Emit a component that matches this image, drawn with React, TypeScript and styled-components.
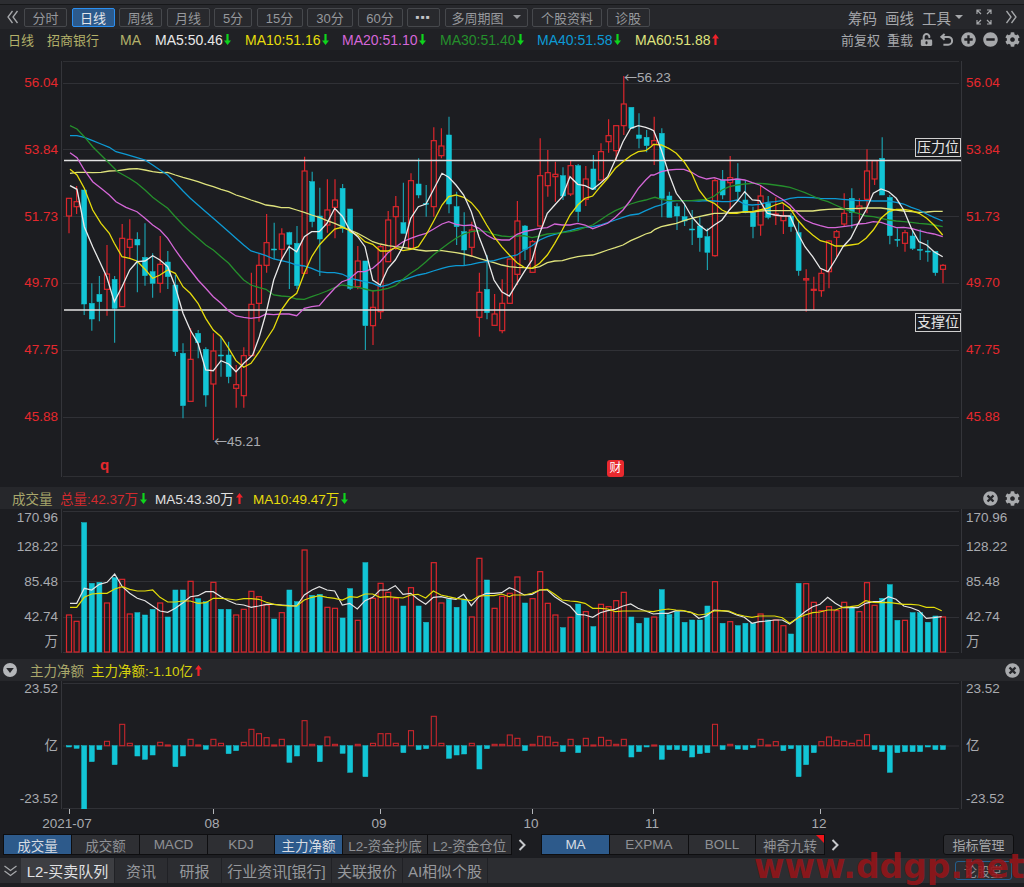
import React from 'react';
import styled, { createGlobalStyle } from 'styled-components';
import { FaCog, FaMinusCircle, FaPlusCircle, FaTimesCircle, FaUnlockAlt } from 'react-icons/fa';

const GlobalStyle = createGlobalStyle`
  html, body { margin: 0; padding: 0; background: #1c1d21; }
  * { box-sizing: border-box; }
`;

const FONT = `"Liberation Sans", "Noto Sans CJK SC", sans-serif`;
const RED = '#dc262c';
const CYAN = '#12c5d6';
const CYAN_WICK = '#1a9dab';
const STEP = 7.6;
const xOf = (i: number) => 68 + STEP * i;

// all chart data was read off the screenshot at 3x, so it stays in those units
type Pt = [number, number];
type Candle = [number, number, number, number, number]; // up, top, bottom, high, low

const toPage = (ox: number, oy: number, pts: Pt[]): Pt[] =>
  pts.map(([x, y]) => [ox + x / 3, oy + y / 3]);

const joinLine = (...parts: Pt[][]) => {
  const out: Pt[] = [];
  parts.flat().forEach(p => {
    if (!out.length || p[0] > out[out.length - 1][0]) out.push(p);
  });
  return out.map(p => `${p[0].toFixed(1)},${p[1].toFixed(1)}`).join(' ');
};

const C_A: Candle[] = [
  [1,265,318,265,370],[1,275,290,228,312],[0,240,582,240,615],[0,580,627,520,662],[0,553,575,498,634],
  [1,492,538,405,617],[0,508,595,498,698],[1,385,590,342,590],[1,388,412,328,445],[0,388,405,367,547],
  [0,442,497,340,527],[0,485,520,430,563],[1,463,520,378,548],[0,456,500,423,537],[0,525,725,495,738],
  [0,730,887,700,925],[1,748,874,655,874],[0,670,698,660,745],[0,718,855,712,890],[1,723,822,670,990],
  [0,735,738,680,800],[0,735,800,695,820],[1,824,835,765,893],[1,737,857,712,893],[1,583,737,488,737],
  [1,466,580,430,635],[1,398,466,312,488],[0,417,419,338,448],[1,372,418,355,450],[0,368,403,365,537],
  [0,400,527,348,537],[1,183,490,140,490],[0,215,335,185,352],[0,318,387,233,498],[1,300,345,208,368],
  [1,270,292,208,385],[0,235,355,222,368],[0,297,535,297,540],
];
const C_B: Candle[] = [
  [1,513,590,468,598],[0,513,707,513,780],[1,652,707,600,765],[1,470,665,465,687],[1,390,515,363,515],
  [1,350,380,318,480],[0,398,430,278,430],[1,272,475,250,480],[0,282,315,205,325],[0,340,342,285,380],
  [1,152,350,112,380],[1,168,197,115,205],[0,135,342,80,370],[0,350,410,305,465],[0,425,480,367,525],
  [1,420,472,395,500],[1,607,682,548,740],[0,598,668,495,688],[1,672,706,612,708],[1,640,722,568,730],
  [1,507,640,507,640],[1,393,553,333,585],[0,408,478,405,510],[1,455,547,450,547],[1,257,408,145,410],
  [1,248,287,180,320],[1,253,260,215,335],[0,257,318,232,330],[1,227,312,212,318],[0,227,365,222,395],
  [1,267,328,228,348],[0,237,298,195,300],[1,185,270,160,270],[1,137,155,88,188],[1,107,182,105,210],
  [1,42,107,-42,135],[0,52,115,52,115],[0,135,145,70,175],[0,142,167,120,187],
];
const C_C: Candle[] = [
  [1,92,103,20,165],[0,70,265,55,322],[0,258,322,245,322],[0,290,318,280,360],[0,320,333,280,348],
  [0,357,359,300,405],[0,348,383,322,425],[0,380,427,355,480],[1,212,437,205,440],[0,210,255,180,268],
  [1,203,218,138,300],[0,207,245,160,270],[0,270,308,210,310],[0,308,350,290,385],[1,258,345,225,377],
  [0,280,322,258,328],[1,312,315,262,345],[1,317,332,280,372],[0,318,350,310,365],[0,368,482,335,497],
  [1,506,510,478,605],[1,538,541,500,600],[1,490,542,475,560],[1,393,485,390,535],[1,365,382,360,440],
  [1,310,342,250,350],[0,265,308,235,355],[1,288,297,265,340],[1,183,268,118,310],[1,152,207,152,225],
  [0,145,255,82,255],[0,262,377,255,403],[0,388,390,355,410],[1,368,400,360,425],[0,378,415,360,420],
  [0,418,420,358,450],[0,423,425,390,455],[0,424,488,424,497],[1,466,478,462,520],
];
const offsetCandles = (list: Candle[], oy: number): Candle[] =>
  list.map(([u, t, b, h, l]) => [u, oy + t / 3, oy + b / 3, oy + h / 3, oy + l / 3]);
const CANDLES = [...offsetCandles(C_A, 110), ...offsetCandles(C_B, 90), ...offsetCandles(C_C, 110)];

const MA_LINES: { color: string; points: string }[] = [
  {
    color: '#dfe37d',
    points: joinLine(
      toPage(50, 110, [[57,190],[78,187],[100,187],[125,188],[150,187],[175,183],[200,182],[235,177],[258,176],[282,180],[305,185],[327,188],[350,187],[373,195],[396,202],[418,208],[441,215],[464,223],[487,230],[510,238],[533,245],[555,255],[578,262],[600,270],[625,278],[645,285],[668,288],[691,293],[714,293],[737,300],[760,307],[782,315],[805,322],[828,332],[851,340],[873,350],[896,362]]),
      toPage(340, 90, [[0,408],[27,420],[50,430],[72,442],[95,455],[118,462],[141,467],[163,470],[186,472],[209,476],[232,480],[255,483],[277,482],[303,482],[323,485],[345,488],[368,492],[391,498],[414,505],[437,512],[459,518],[482,525],[505,530],[528,532],[550,533],[573,535],[596,530],[619,518],[641,513],[664,512],[687,505],[710,500],[732,497],[755,495],[778,488],[800,480],[823,473],[846,465],[869,452],[892,442],[914,432],[930,427]]),
      toPage(640, 110, [[0,380],[20,370],[42,358],[61,350],[83,345],[106,340],[129,332],[152,325],[174,320],[197,315],[220,310],[243,310],[265,308],[288,307],[311,306],[334,306],[356,303],[379,302],[402,302],[424,302],[447,302],[470,303],[492,303],[515,303],[538,300],[561,298],[583,297],[606,297],[629,296],[652,295],[675,294],[697,294],[720,294],[743,297],[766,300],[788,303],[811,305],[834,307],[857,306],[879,304],[905,304]]),
    ),
  },
  {
    color: '#0d9ad4',
    points: joinLine(
      toPage(50, 110, [[57,77],[78,77],[100,82],[125,92],[150,102],[175,112],[195,125],[225,133],[258,143],[282,150],[305,165],[327,180],[350,195],[373,218],[396,243],[418,265],[441,285],[464,305],[487,325],[510,345],[533,365],[555,385],[578,405],[600,423],[625,430],[645,437],[668,447],[691,452],[714,457],[737,465],[760,468],[782,475],[805,485],[828,488],[851,488],[873,492],[896,503]]),
      toPage(340, 90, [[0,553],[27,565],[50,570],[72,575],[95,580],[118,590],[141,585],[163,575],[186,570],[209,562],[232,555],[255,550],[277,543],[303,535],[323,530],[345,527],[368,527],[391,523],[414,518],[437,515],[459,512],[482,505],[505,500],[528,495],[550,480],[573,467],[596,450],[619,440],[641,433],[664,427],[687,422],[710,415],[732,412],[755,410],[778,405],[800,398],[823,390],[846,382],[869,375],[892,372],[914,362],[930,355]]),
      toPage(640, 110, [[0,308],[20,297],[42,290],[61,285],[83,275],[106,272],[129,272],[152,272],[174,273],[197,272],[220,273],[243,275],[265,275],[288,270],[311,283],[334,285],[356,283],[379,277],[402,275],[424,272],[447,265],[470,262],[492,262],[515,263],[538,265],[561,266],[583,266],[606,268],[629,270],[652,272],[675,272],[697,273],[720,273],[743,273],[766,277],[788,282],[811,292],[834,300],[857,312],[879,322],[905,333]]),
    ),
  },
  {
    color: '#258f2c',
    points: joinLine(
      toPage(50, 110, [[57,47],[78,57],[100,80],[125,110],[150,135],[175,160],[200,185],[235,205],[258,220],[282,240],[305,262],[327,278],[350,295],[373,320],[396,345],[418,365],[441,385],[464,405],[487,420],[510,440],[533,460],[555,485],[578,510],[600,525],[625,533],[645,538],[668,555],[691,558],[714,560],[737,567],[760,568],[782,560],[805,552],[828,543],[851,533],[873,525],[896,528]]),
      toPage(340, 90, [[0,585],[27,590],[50,592],[72,597],[95,603],[118,600],[141,595],[163,587],[186,568],[209,550],[232,535],[255,515],[277,495],[303,475],[323,460],[345,445],[368,432],[391,425],[414,422],[437,425],[459,433],[482,438],[505,440],[528,438],[550,437],[573,443],[596,438],[619,432],[641,430],[664,428],[687,425],[710,420],[732,412],[755,405],[778,390],[800,375],[823,362],[846,352],[869,342],[892,335],[914,330],[930,325]]),
      toPage(640, 110, [[0,270],[20,267],[42,262],[61,268],[83,272],[106,272],[129,272],[152,272],[174,270],[197,268],[220,258],[243,240],[265,230],[288,225],[311,222],[334,220],[356,220],[379,222],[402,225],[424,228],[447,232],[470,240],[492,248],[515,258],[538,268],[561,275],[583,285],[606,295],[629,305],[652,310],[675,318],[697,320],[720,325],[743,330],[766,333],[788,335],[811,337],[834,340],[857,342],[879,345],[905,350]]),
    ),
  },
  {
    color: '#d567d8',
    points: joinLine(
      toPage(50, 110, [[57,128],[78,143],[100,180],[125,215],[150,235],[175,255],[195,275],[225,292],[258,305],[282,325],[305,345],[327,360],[350,385],[373,420],[396,452],[418,480],[441,510],[464,535],[487,560],[510,580],[533,603],[555,618],[578,622],[600,625],[625,622],[645,612],[668,614],[691,612],[714,612],[737,617],[760,595],[782,590],[805,587],[828,560],[851,535],[873,515],[896,507]]),
      toPage(340, 90, [[0,583],[27,565],[50,545],[72,545],[95,535],[118,515],[141,488],[163,472],[186,455],[209,445],[232,437],[255,430],[277,418],[303,402],[323,395],[345,403],[368,407],[391,405],[414,415],[437,435],[459,447],[482,450],[505,450],[528,433],[550,425],[573,420],[596,415],[619,413],[641,402],[664,405],[687,405],[710,400],[732,405],[755,416],[778,408],[800,400],[823,382],[846,360],[869,330],[892,295],[914,270],[930,255]]),
      toPage(640, 110, [[0,240],[20,215],[38,195],[61,185],[83,180],[106,178],[129,178],[152,187],[174,200],[197,207],[220,203],[243,210],[265,210],[288,207],[311,210],[334,218],[356,225],[379,240],[402,255],[424,268],[447,285],[470,310],[492,330],[515,340],[538,347],[561,353],[583,353],[606,350],[629,347],[652,342],[675,340],[697,335],[720,337],[743,345],[766,353],[788,352],[811,355],[834,362],[857,368],[879,372],[905,380]]),
    ),
  },
  {
    color: '#e6dc0c',
    points: joinLine(
      toPage(50, 110, [[57,178],[78,195],[100,235],[125,300],[150,340],[175,370],[190,400],[213,440],[236,445],[258,453],[282,478],[305,505],[327,495],[350,480],[373,490],[396,530],[418,550],[441,580],[464,625],[487,660],[510,680],[533,715],[555,752],[578,772],[600,760],[625,725],[645,690],[668,655],[691,600],[714,568],[737,550],[760,490],[782,440],[805,405],[828,380],[851,357],[873,352],[896,360]]),
      toPage(340, 90, [[0,408],[27,425],[50,435],[72,455],[95,463],[118,483],[141,483],[163,473],[186,482],[209,478],[232,470],[255,435],[277,395],[303,345],[323,320],[345,315],[368,322],[391,338],[414,365],[437,405],[459,440],[482,470],[505,495],[528,518],[550,532],[573,535],[596,520],[619,495],[641,460],[664,420],[687,375],[710,345],[732,325],[755,318],[778,290],[800,265],[823,235],[846,215],[869,197],[892,185],[914,182],[930,170]]),
      toPage(640, 110, [[0,125],[20,115],[38,103],[61,105],[83,115],[106,130],[129,155],[152,190],[174,240],[197,270],[220,280],[243,300],[265,310],[288,310],[311,305],[334,305],[356,300],[379,295],[402,285],[424,278],[447,295],[470,330],[492,355],[515,375],[538,392],[561,398],[583,408],[606,408],[629,405],[652,402],[675,385],[697,360],[720,325],[743,305],[766,298],[788,298],[811,302],[834,310],[857,325],[879,345],[905,375]]),
    ),
  },
  {
    color: '#e9e9e9',
    points: joinLine(
      toPage(50, 110, [[57,227],[78,238],[100,350],[125,410],[167,500],[190,575],[213,530],[236,480],[258,455],[282,453],[305,437],[327,450],[350,470],[373,530],[396,610],[418,660],[441,700],[464,780],[487,782],[510,752],[533,762],[555,785],[578,760],[605,735],[625,680],[645,610],[668,510],[691,450],[714,410],[737,425],[760,380],[782,365],[805,365],[828,340],[851,295],[875,320],[896,360]]),
      toPage(340, 90, [[0,375],[27,420],[50,440],[72,470],[95,570],[118,585],[141,535],[163,510],[186,470],[209,385],[232,350],[255,342],[277,300],[303,250],[323,262],[345,285],[368,315],[391,365],[414,440],[437,500],[459,570],[482,605],[505,618],[528,580],[550,545],[573,510],[596,430],[619,370],[641,345],[664,320],[687,260],[710,283],[732,287],[755,298],[778,280],[800,260],[823,210],[846,155],[869,115],[892,107],[914,112],[930,118]]),
      toPage(640, 110, [[0,45],[38,62],[61,120],[83,190],[106,250],[129,280],[152,320],[174,345],[197,362],[220,345],[243,330],[265,300],[288,275],[311,245],[334,270],[356,272],[379,310],[402,315],[424,318],[447,318],[470,370],[492,410],[515,440],[538,475],[561,485],[583,450],[606,410],[629,385],[652,340],[675,300],[697,250],[720,237],[743,245],[766,265],[788,300],[811,355],[834,395],[857,405],[879,425],[905,440]]),
    ),
  },
];

const VOLUME_TOPS = [
  405,424,128,310,307,369,293,298,402,398,405,388,369,411,330,330,304,356,365,307,388,388,405,388,334,350,375,417,398,330,
  365,210,346,343,382,385,414,326,421,248,355,310,337,356,378,323,378,427,248,369,358,382,360,411,235,300,385,349,340,
  291,369,356,275,370,405,443,412,372,395,440,373,380,362,337,411,430,414,411,329,404,395,427,420,420,378,305,430,425,437,
  430,430,402,420,420,437,462,310,311,367,392,380,392,367,382,395,308,376,355,314,421,421,398,398,427,408,411,
];

const VOL_MA5 = joinLine(
  toPage(0, 480, [[207,370],[227,370],[250,325],[272,330],[295,313],[318,307],[341,282],[364,320],[386,340],[409,355],[432,362],[455,378],[477,393],[500,397],[523,385],[546,368],[568,350],[591,347],[614,335],[637,335],[660,350],[682,362],[705,372],[728,375],[751,382],[773,378],[796,373],[819,373],[842,375],[864,377],[887,378],[910,345],[933,330],[955,320],[978,330],[1001,333],[1024,375],[1046,370],[1069,387],[1092,362],[1115,352],[1137,330],[1160,330],[1183,317],[1206,343],[1229,340],[1251,358],[1274,373],[1297,352],[1320,350],[1342,355],[1365,358],[1388,343],[1411,377],[1434,350],[1456,340],[1479,340],[1502,338],[1525,323]]),
  toPage(512, 480, [[0,327],[34,345],[57,343],[80,330],[103,330],[125,350],[148,365],[171,378],[193,403],[216,405],[239,412],[262,398],[284,392],[307,388],[330,378],[353,372],[375,385],[398,393],[421,402],[444,400],[466,400],[489,392],[512,393],[535,397],[557,415],[580,408],[603,390],[626,392],[648,395],[671,405],[694,412],[717,430],[739,425],[762,423],[785,420],[808,420],[830,432],[853,415],[876,395],[899,380],[921,373],[944,352],[967,370],[990,383],[1012,383],[1035,383],[1058,370],[1081,365],[1103,365],[1126,350],[1149,358],[1172,378],[1194,383],[1217,392],[1240,415],[1263,413],[1286,410]]),
);
const VOL_MA10 = joinLine(
  toPage(0, 480, [[207,382],[227,382],[250,352],[272,342],[295,340],[318,340],[341,327],[364,320],[386,328],[409,333],[432,333],[455,330],[477,352],[500,366],[523,366],[546,363],[568,363],[591,370],[614,368],[637,355],[660,355],[682,357],[705,360],[728,356],[751,356],[773,358],[796,367],[819,373],[842,376],[864,378],[887,378],[910,360],[933,352],[955,347],[978,352],[1001,355],[1024,360],[1046,350],[1069,352],[1092,342],[1115,342],[1137,352],[1160,350],[1183,352],[1206,354],[1229,345],[1251,343],[1274,354],[1297,333],[1320,345],[1342,350],[1365,355],[1388,358],[1411,362],[1434,348],[1456,347],[1479,347],[1502,342],[1525,350]]),
  toPage(512, 480, [[0,345],[34,345],[57,340],[80,330],[103,328],[125,343],[148,360],[171,363],[193,365],[216,370],[239,385],[262,385],[284,387],[307,395],[330,393],[353,393],[375,393],[398,393],[421,395],[444,390],[466,387],[489,390],[512,392],[535,398],[557,405],[580,402],[603,393],[626,392],[648,393],[671,403],[694,408],[717,412],[739,408],[762,408],[785,408],[808,413],[830,430],[853,415],[876,405],[899,398],[921,396],[944,390],[967,390],[990,382],[1012,380],[1035,377],[1058,362],[1081,367],[1103,368],[1126,367],[1149,370],[1172,373],[1194,373],[1217,375],[1240,382],[1263,382],[1286,392]]),
);

// net-flow bars: end of each bar, zero sits at 272
const FLOW_ENDS = [
  276,280,465,320,284,259,329,208,265,303,313,300,262,270,335,303,253,270,283,253,265,296,287,262,223,236,248,270,253,322,
  303,197,268,320,246,268,295,352,268,365,265,236,236,265,293,227,284,281,184,265,310,300,297,265,342,281,268,268,240,
  250,287,268,244,246,262,290,253,293,250,270,247,256,268,253,306,290,276,270,313,284,284,287,306,296,293,208,284,268,282,
  284,278,253,270,260,287,281,365,329,293,260,246,256,259,265,256,239,284,290,352,293,290,290,290,276,284,284,
];

const Page = styled.div`
  position: relative;
  width: 1024px;
  height: 887px;
  overflow: hidden;
  display: flex;
  flex-direction: column;
  background: #1c1d21;
  font-family: ${FONT};
`;

const TopStrip = styled.div`
  height: 5px;
  background: #2c2d31;
  border-bottom: 1px solid #17181a;
`;

const Toolbar = styled.div`
  height: 24px;
  display: flex;
  align-items: center;
  background: #26272b;
`;

const CollapseBtn = styled.span`
  width: 24px;
  display: flex;
  justify-content: center;
  color: #a6a8ab;
`;

const PeriodGroup = styled.div`
  display: flex;
  align-items: center;
  gap: 4.5px;
`;

const PeriodBtn = styled.button<{ $w: number; $active?: boolean }>`
  width: ${p => p.$w}px;
  height: 19px;
  padding: 0;
  display: flex;
  align-items: center;
  justify-content: center;
  gap: 5px;
  font: 13px ${FONT};
  border-radius: 2px;
  border: 1px solid ${p => (p.$active ? '#2b8ff0' : '#46484c')};
  background: ${p => (p.$active ? '#2c5a8c' : '#28292d')};
  color: ${p => (p.$active ? '#e4e6ea' : '#96989c')};
`;

const Dots = styled.span`
  font-size: 6px;
  letter-spacing: 1.5px;
  color: #c4c6c9;
`;

const ToolGroup = styled.div`
  margin-left: auto;
  display: flex;
  align-items: center;
  color: #a6a8ab;
  font-size: 14.5px;
`;

const ToolItem = styled.span<{ $w: number }>`
  width: ${p => p.$w}px;
  display: flex;
  align-items: center;
`;

const Caret = styled.span`
  width: 0;
  height: 0;
  margin-left: 4px;
  border-left: 4px solid transparent;
  border-right: 4px solid transparent;
  border-top: 4px solid currentColor;
`;

const LegendBar = styled.div`
  height: 21px;
  display: flex;
  align-items: center;
  padding-left: 8px;
  background: #202125;
  font-size: 14px;
`;

const LegendItem = styled.span<{ $w: number; $color: string; $cjk?: boolean }>`
  width: ${p => p.$w}px;
  flex: none;
  display: flex;
  align-items: center;
  gap: 1px;
  color: ${p => p.$color};
  font-size: ${p => (p.$cjk ? 13 : 14)}px;
  white-space: nowrap;
`;

const LegendTools = styled.div`
  margin-left: auto;
  display: flex;
  align-items: center;
  gap: 7px;
  padding-right: 4px;
  color: #a6a8ab;
  font-size: 13px;
`;

const ChartRow = styled.div<{ $h: number; $mt?: number; $mb?: number }>`
  height: ${p => p.$h}px;
  margin-top: ${p => p.$mt ?? 0}px;
  margin-bottom: ${p => p.$mb ?? 0}px;
  display: grid;
  grid-template-columns: 61px 900px 63px;
`;

const AxisColumn = styled.div<{ $side: 'left' | 'right'; $pt?: number }>`
  padding-top: ${p => p.$pt ?? 0}px;
  ${p =>
    p.$side === 'left'
      ? 'text-align: right; padding-right: 3px;'
      : 'text-align: left; padding-left: 4px; border-left: 1px solid #34353a;'}
`;

const AxisLabel = styled.div<{ $h: number; $red?: boolean }>`
  height: ${p => p.$h}px;
  line-height: 16px;
  font-size: 13.5px;
  color: ${p => (p.$red ? '#e5282d' : '#a9abb0')};
`;

const Plot = styled.div`
  position: relative;
  border-left: 1px solid #34353a;
`;

const PlotSvg = styled.svg`
  position: absolute;
  left: 0;
  top: 0;
  display: block;
`;

const LevelTag = styled.span<{ $top: number }>`
  position: absolute;
  left: 853px;
  top: ${p => p.$top}px;
  width: 46px;
  height: 19px;
  border: 1.5px solid #cfcfcf;
  background: #1c1d21;
  color: #e6e6e6;
  font-size: 14px;
  line-height: 16px;
  text-align: center;
`;

const PriceMark = styled.span<{ $left: number; $top: number }>`
  position: absolute;
  left: ${p => p.$left}px;
  top: ${p => p.$top}px;
  color: #a9abb0;
  font-size: 13.5px;
  line-height: 16px;
  white-space: nowrap;
`;

const LongArrow = styled.span`
  font-family: "Noto Sans CJK SC", sans-serif;
  font-size: 13px;
`;

const SignalQ = styled.span`
  position: absolute;
  left: 38px;
  top: 396px;
  color: #e5282d;
  font-size: 15px;
  font-weight: bold;
  line-height: 16px;
`;

const CaiBadge = styled.span`
  position: absolute;
  left: 545px;
  top: 399px;
  width: 17px;
  height: 17px;
  border-radius: 3px;
  background: #e8292e;
  color: #fff;
  font-size: 12px;
  line-height: 17px;
  text-align: center;
`;

const PanelHeader = styled.div`
  height: 22px;
  display: flex;
  align-items: center;
  background: #26272b;
  font-size: 13.5px;
`;

const HeaderItem = styled.span<{ $w: number; $color: string; $ml?: number }>`
  width: ${p => p.$w}px;
  flex: none;
  margin-left: ${p => p.$ml ?? 0}px;
  display: flex;
  align-items: center;
  gap: 2px;
  color: ${p => p.$color};
  white-space: nowrap;
`;

const HeaderIcons = styled.div`
  margin-left: auto;
  padding-right: 4px;
  display: flex;
  align-items: center;
  gap: 7px;
  color: #a9abae;
`;

const XAxisRow = styled.div`
  height: 25px;
`;

const XAxisSvg = styled.svg`
  display: block;
`;

const TabsRow = styled.div`
  height: 21px;
  display: flex;
  align-items: stretch;
  padding-left: 3px;
`;

const TabGroup = styled.div<{ $ml?: number }>`
  display: flex;
  margin-left: ${p => p.$ml ?? 0}px;
  background: #0e0e10;
  padding: 1px;
  gap: 1px;
`;

const Tab = styled.span<{ $w: number; $active?: boolean }>`
  position: relative;
  width: ${p => p.$w}px;
  display: flex;
  align-items: center;
  justify-content: center;
  font-size: 13.5px;
  white-space: nowrap;
  background: ${p => (p.$active ? '#2d5a8b' : '#2e2f33')};
  color: ${p => (p.$active ? '#d8dce2' : '#8f9195')};
`;

const CornerFlag = styled.span`
  position: absolute;
  top: 0;
  right: 0;
  border-top: 8px solid #f0141a;
  border-left: 8px solid transparent;
`;

const TabArrow = styled.span`
  width: 20px;
  display: flex;
  align-items: center;
  justify-content: center;
  color: #c6c8cb;
`;

const ManageBtn = styled.button`
  margin-left: auto;
  margin-right: 10px;
  width: 71px;
  padding: 0;
  font: 13px ${FONT};
  color: #a6a8ab;
  background: #2b2c30;
  border: 1px solid #0e0e10;
  border-radius: 3px;
`;

const BottomBar = styled.div`
  margin-top: 3px;
  height: 25px;
  display: flex;
  align-items: stretch;
  background: #2c2d31;
  font-size: 15px;
`;

const ExpandBtn = styled.span`
  width: 21px;
  display: flex;
  align-items: center;
  justify-content: center;
  color: #a6a8ab;
`;

const BottomTab = styled.span<{ $w: number; $active?: boolean }>`
  width: ${p => p.$w}px;
  display: flex;
  align-items: center;
  justify-content: center;
  white-space: nowrap;
  border-right: 1px solid #202125;
  background: ${p => (p.$active ? '#3d3e42' : 'transparent')};
  color: ${p => (p.$active ? '#e0e1e3' : '#96989c')};
`;

const ForumBtn = styled.span`
  margin: 3px 12px 3px auto;
  width: 57px;
  display: flex;
  align-items: center;
  justify-content: center;
  color: #8f9195;
  font-size: 13px;
  border: 1px solid #245f8f;
  border-radius: 3px;
`;

const BottomStrip = styled.div`
  height: 4px;
  background: #1d1e21;
`;

const Watermark = styled.span`
  position: absolute;
  left: 754px;
  top: 845px;
  font: bold 33px/44px "DejaVu Sans", sans-serif;
  color: rgba(150, 20, 24, 0.88);
  white-space: nowrap;
`;

const ArrowSvg = styled.svg<{ $up?: boolean }>`
  flex: none;
  transform: ${p => (p.$up ? 'rotate(180deg)' : 'none')};
`;

const Arrow = ({ down }: { down?: boolean }) => (
  <ArrowSvg width="7" height="11" viewBox="0 0 7 11" $up={!down}>
    <path d="M2.4 0h2.2v6.5H7L3.5 11 0 6.5h2.4z" fill={down ? '#0fd41d' : '#f0222a'} />
  </ArrowSvg>
);

const ChevronSvg = styled.svg<{ $dir: 'left' | 'right' | 'down' }>`
  transform: rotate(${p => (p.$dir === 'right' ? 180 : p.$dir === 'down' ? -90 : 0)}deg);
`;

const DoubleChevron = ({ dir }: { dir: 'left' | 'right' | 'down' }) => (
  <ChevronSvg width="13" height="14" viewBox="0 0 13 14" $dir={dir}>
    <path d="M6.5 1 2 7l4.5 6M11.5 1 7 7l4.5 6" fill="none" stroke="currentColor" strokeWidth="1.3" />
  </ChevronSvg>
);

const SingleChevron = () => (
  <svg width="8" height="12" viewBox="0 0 8 12">
    <path d="M1.5 1 6.5 6l-5 5" fill="none" stroke="currentColor" strokeWidth="2" />
  </svg>
);

const FullscreenIcon = () => (
  <svg width="16" height="16" viewBox="0 0 16 16">
    <path
      d="M1 5V1h4M1 1l4 4M11 1h4v4M15 1l-4 4M1 11v4h4M1 15l4-4M15 11v4h-4M15 15l-4-4"
      fill="none"
      stroke="currentColor"
      strokeWidth="1.2"
    />
  </svg>
);

const UndoIcon = () => (
  <svg width="14" height="14" viewBox="0 0 14 14">
    <path d="M4.6 1 1.4 3.9l3.2 2.9" fill="none" stroke="currentColor" strokeWidth="2" />
    <path d="M2 3.9h6.2a3.9 3.9 0 0 1 0 7.8H3.4" fill="none" stroke="currentColor" strokeWidth="2" />
  </svg>
);

const CollapseCircle = () => (
  <svg width="14" height="14" viewBox="0 0 14 14">
    <circle cx="7" cy="7" r="7" fill="#b4b6b9" />
    <path d="M3.2 5h7.6L7 10z" fill="#26272b" />
  </svg>
);

const MainChart = () => (
  <PlotSvg width="900" height="416" viewBox="61 61 900 416">
    <path d="M62 61.5H958M62 476.5H958" stroke="#2e2f33" />
    {[83, 149, 216, 283, 350, 417].map(y => (
      <path key={y} d={`M62 ${y + 0.5}H958`} stroke="#303136" />
    ))}
    {CANDLES.map(([up, top, bottom, high, low], i) => {
      const x = xOf(i);
      const color = up ? RED : CYAN;
      const h = Math.max(bottom - top, 1);
      return (
        <g key={i}>
          <line x1={x} x2={x} y1={high} y2={top} stroke={up ? color : CYAN_WICK} strokeWidth="1.2" />
          <line x1={x} x2={x} y1={bottom} y2={low} stroke={up ? color : CYAN_WICK} strokeWidth="1.2" />
          <rect
            x={x - 2.5}
            y={top}
            width={5}
            height={h}
            fill={up ? '#1c1d21' : color}
            stroke={color}
            strokeWidth={up ? 1.2 : 0.5}
          />
        </g>
      );
    })}
    <path d="M63 160.5H960M63 310H960" stroke="#e2e2e2" strokeWidth="1.4" />
    {MA_LINES.map(line => (
      <polyline key={line.color} points={line.points} fill="none" stroke={line.color} strokeWidth="1.3" />
    ))}
  </PlotSvg>
);

const VolumeChart = () => (
  <PlotSvg width="900" height="144" viewBox="61 509 900 144">
    {[511.5, 545.5, 581.5, 617.5, 652.5].map(y => (
      <path key={y} d={`M62 ${y}H958`} stroke="#303136" />
    ))}
    {VOLUME_TOPS.map((z, i) => {
      const top = 480 + z / 3;
      const up = CANDLES[i][0];
      return (
        <rect
          key={i}
          x={xOf(i) - 2.5}
          y={top}
          width={5}
          height={652 - top}
          fill={up ? 'none' : CYAN}
          stroke={up ? RED : CYAN}
          strokeWidth={up ? 1.2 : 0.5}
        />
      );
    })}
    <polyline points={VOL_MA5} fill="none" stroke="#e4e4e4" strokeWidth="1.2" />
    <polyline points={VOL_MA10} fill="none" stroke="#e2dc0a" strokeWidth="1.2" />
  </PlotSvg>
);

const FlowChart = () => (
  <PlotSvg width="900" height="128" viewBox="61 681 900 128">
    <path d="M62 683.5H958M62 746H958M62 808.5H958" stroke="#303136" />
    {FLOW_ENDS.map((z, i) => {
      const y = 655 + z / 3;
      const up = y < 745.7;
      const top = Math.min(y, 745.7);
      const h = Math.min(Math.abs(y - 745.7), 809 - top);
      return (
        <rect
          key={i}
          x={xOf(i) - 2.5}
          y={top}
          width={5}
          height={Math.max(h, 1)}
          fill={up ? 'none' : CYAN}
          stroke={up ? '#c6262c' : CYAN}
          strokeWidth={up ? 1.1 : 0.5}
        />
      );
    })}
  </PlotSvg>
);

const XAxis = () => (
  <XAxisSvg width="1024" height="25" viewBox="0 809 1024 25">
    {[
      { tick: 69, at: 67, text: '2021-07' },
      { tick: 213, at: 212, text: '08' },
      { tick: 380, at: 379, text: '09' },
      { tick: 532, at: 531, text: '10' },
      { tick: 653, at: 652, text: '11' },
      { tick: 820, at: 819, text: '12' },
    ].map(m => (
      <g key={m.tick}>
        <path d={`M${m.tick + 0.5} 809v5`} stroke="#b4b6b9" />
        <text x={m.at} y={828} fill="#a9abb0" fontSize="13.5" textAnchor="middle" fontFamily={FONT}>
          {m.text}
        </text>
      </g>
    ))}
  </XAxisSvg>
);

const PERIODS: { label: string; w: number; active?: boolean }[] = [
  { label: '分时', w: 43 },
  { label: '日线', w: 43, active: true },
  { label: '周线', w: 43 },
  { label: '月线', w: 43 },
  { label: '5分', w: 38 },
  { label: '15分', w: 46 },
  { label: '30分', w: 46 },
  { label: '60分', w: 45 },
];

const LEGEND: { text: string; w: number; color: string; down: boolean }[] = [
  { text: 'MA5:50.46', w: 90, color: '#e8e8e8', down: true },
  { text: 'MA10:51.16', w: 97, color: '#e6dc0c', down: true },
  { text: 'MA20:51.10', w: 98, color: '#d567d8', down: true },
  { text: 'MA30:51.40', w: 97, color: '#258f2c', down: true },
  { text: 'MA40:51.58', w: 98, color: '#0d9ad4', down: true },
  { text: 'MA60:51.88', w: 90, color: '#dfe37d', down: false },
];

const PRICE_LEVELS = ['56.04', '53.84', '51.73', '49.70', '47.75', '45.88'];

const VolumeAxis = ({ side }: { side: 'left' | 'right' }) => (
  <AxisColumn $side={side} $pt={1}>
    <AxisLabel $h={29}>170.96</AxisLabel>
    <AxisLabel $h={35}>128.22</AxisLabel>
    <AxisLabel $h={35}>85.48</AxisLabel>
    <AxisLabel $h={25}>42.74</AxisLabel>
    <AxisLabel $h={16}>万</AxisLabel>
  </AxisColumn>
);

const FlowAxis = ({ side }: { side: 'left' | 'right' }) => (
  <AxisColumn $side={side}>
    <AxisLabel $h={57}>23.52</AxisLabel>
    <AxisLabel $h={53}>亿</AxisLabel>
    <AxisLabel $h={16}>-23.52</AxisLabel>
  </AxisColumn>
);

const PriceAxis = ({ side }: { side: 'left' | 'right' }) => (
  <AxisColumn $side={side} $pt={14}>
    {PRICE_LEVELS.map(v => (
      <AxisLabel key={v} $h={66.8} $red>
        {v}
      </AxisLabel>
    ))}
  </AxisColumn>
);

export default function App() {
  return (
    <Page>
      <GlobalStyle />
      <TopStrip />
      <Toolbar>
        <CollapseBtn>
          <DoubleChevron dir="left" />
        </CollapseBtn>
        <PeriodGroup>
          {PERIODS.map(p => (
            <PeriodBtn key={p.label} $w={p.w} $active={p.active}>
              {p.label}
            </PeriodBtn>
          ))}
          <PeriodBtn $w={33}>
            <Dots>■■■</Dots>
          </PeriodBtn>
          <PeriodBtn $w={83}>
            多周期图
            <Caret />
          </PeriodBtn>
          <PeriodBtn $w={70}>个股资料</PeriodBtn>
          <PeriodBtn $w={43}>诊股</PeriodBtn>
        </PeriodGroup>
        <ToolGroup>
          <ToolItem $w={37}>筹码</ToolItem>
          <ToolItem $w={37}>画线</ToolItem>
          <ToolItem $w={54}>
            工具
            <Caret />
          </ToolItem>
          <ToolItem $w={29}>
            <FullscreenIcon />
          </ToolItem>
          <ToolItem $w={19}>
            <DoubleChevron dir="right" />
          </ToolItem>
        </ToolGroup>
      </Toolbar>
      <LegendBar>
        <LegendItem $w={39} $color="#b3b16a" $cjk>
          日线
        </LegendItem>
        <LegendItem $w={73} $color="#b3b16a" $cjk>
          招商银行
        </LegendItem>
        <LegendItem $w={35} $color="#b3b16a">
          MA
        </LegendItem>
        {LEGEND.map(item => (
          <LegendItem key={item.text} $w={item.w} $color={item.color}>
            {item.text}
            <Arrow down={item.down} />
          </LegendItem>
        ))}
        <LegendTools>
          <span>前复权</span>
          <span>重载</span>
          <FaUnlockAlt size={13} />
          <UndoIcon />
          <FaPlusCircle size={15} />
          <FaMinusCircle size={15} />
          <FaCog size={15} />
        </LegendTools>
      </LegendBar>

      <ChartRow $h={416} $mt={11} $mb={10}>
        <PriceAxis side="left" />
        <Plot>
          <MainChart />
          <PriceMark $left={562} $top={8}>
            <LongArrow>←</LongArrow>56.23
          </PriceMark>
          <PriceMark $left={152} $top={372}>
            <LongArrow>←</LongArrow>45.21
          </PriceMark>
          <LevelTag $top={77}>压力位</LevelTag>
          <LevelTag $top={252}>支撑位</LevelTag>
          <SignalQ>q</SignalQ>
          <CaiBadge>财</CaiBadge>
        </Plot>
        <PriceAxis side="right" />
      </ChartRow>

      <PanelHeader>
        <HeaderItem $w={48} $ml={12} $color="#a9a76b">
          成交量
        </HeaderItem>
        <HeaderItem $w={95} $color="#d22a2e">
          总量:42.37万
          <Arrow down />
        </HeaderItem>
        <HeaderItem $w={98} $color="#e0e0e0">
          MA5:43.30万
          <Arrow />
        </HeaderItem>
        <HeaderItem $w={100} $color="#e6dc0c">
          MA10:49.47万
          <Arrow down />
        </HeaderItem>
        <HeaderIcons>
          <FaTimesCircle size={15} />
          <FaCog size={15} />
        </HeaderIcons>
      </PanelHeader>
      <ChartRow $h={144} $mb={6}>
        <VolumeAxis side="left" />
        <Plot>
          <VolumeChart />
        </Plot>
        <VolumeAxis side="right" />
      </ChartRow>

      <PanelHeader>
        <HeaderItem $w={27} $ml={3} $color="#b4b6b9">
          <CollapseCircle />
        </HeaderItem>
        <HeaderItem $w={61} $color="#a9a76b">
          主力净额
        </HeaderItem>
        <HeaderItem $w={120} $color="#d8d20c">
          主力净额:-1.10亿
          <Arrow />
        </HeaderItem>
        <HeaderIcons>
          <FaTimesCircle size={15} />
        </HeaderIcons>
      </PanelHeader>
      <ChartRow $h={128}>
        <FlowAxis side="left" />
        <Plot>
          <FlowChart />
        </Plot>
        <FlowAxis side="right" />
      </ChartRow>
      <XAxisRow>
        <XAxis />
      </XAxisRow>

      <TabsRow>
        <TabGroup>
          <Tab $w={67} $active>
            成交量
          </Tab>
          <Tab $w={67}>成交额</Tab>
          <Tab $w={67}>MACD</Tab>
          <Tab $w={66}>KDJ</Tab>
          <Tab $w={67} $active>
            主力净额
          </Tab>
          <Tab $w={84}>L2-资金抄底</Tab>
          <Tab $w={83}>L2-资金仓位</Tab>
        </TabGroup>
        <TabArrow>
          <SingleChevron />
        </TabArrow>
        <TabGroup $ml={9}>
          <Tab $w={67} $active>
            MA
          </Tab>
          <Tab $w={78}>EXPMA</Tab>
          <Tab $w={66}>BOLL</Tab>
          <Tab $w={68}>
            神奇九转
            <CornerFlag />
          </Tab>
        </TabGroup>
        <TabArrow>
          <SingleChevron />
        </TabArrow>
        <ManageBtn>指标管理</ManageBtn>
      </TabsRow>

      <BottomBar>
        <ExpandBtn>
          <DoubleChevron dir="down" />
        </ExpandBtn>
        <BottomTab $w={94} $active>
          L2-买卖队列
        </BottomTab>
        <BottomTab $w={53}>资讯</BottomTab>
        <BottomTab $w={54}>研报</BottomTab>
        <BottomTab $w={110}>行业资讯[银行]</BottomTab>
        <BottomTab $w={71}>关联报价</BottomTab>
        <BottomTab $w={85}>AI相似个股</BottomTab>
        <ForumBtn>论股堂</ForumBtn>
      </BottomBar>
      <BottomStrip />
      <Watermark>www.ddgp.net</Watermark>
    </Page>
  );
}
